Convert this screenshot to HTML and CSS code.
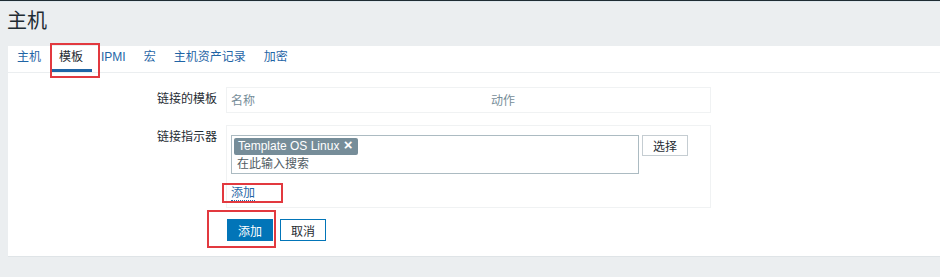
FILE: index.html
```html
<!DOCTYPE html>
<html lang="zh-CN">
<head>
    <meta charset="UTF-8">
    <title>主机</title>
    <link rel="stylesheet" href="styles.css">
</head>
<body>

    <header class="page-header">
        <h1>主机</h1>
    </header>

    <div class="page-body">
        <ul class="tabs">
            <li><a href="#">主机</a></li>
            <li class="active marked"><a href="#">模板</a></li>
            <li><a href="#">IPMI</a></li>
            <li><a href="#">宏</a></li>
            <li><a href="#">主机资产记录</a></li>
            <li><a href="#">加密</a></li>
        </ul>

        <form class="form-grid">
            <label class="form-label">链接的模板</label>
            <div class="form-box linked-box">
                <table class="linked-table">
                    <tr>
                        <th class="col-name">名称</th>
                        <th>动作</th>
                    </tr>
                </table>
            </div>

            <label class="form-label">链接指示器</label>
            <div class="form-box indicator-box">
                <div class="select-row">
                    <div class="multiselect">
                        <span class="tag">Template OS Linux <b class="tag-remove">&times;</b></span>
                        <div class="ms-input">在此输入搜索</div>
                    </div>
                    <button type="button" class="btn-alt">选择</button>
                </div>
                <div class="add-row">
                    <a href="#" class="link-action marked">添加</a>
                </div>
            </div>

            <div></div>
            <div class="form-buttons">
                <span class="marked btn-mark"><button type="button" class="btn-primary">添加</button></span>
                <button type="button" class="btn-cancel">取消</button>
            </div>
        </form>
    </div>

</body>
</html>
```

FILE: styles.css
```css
/* Base */
body {
    margin: 0;
    font-family: "Liberation Sans", "Noto Sans CJK SC", sans-serif;
    font-size: 12px;
    color: #1f2c33;
    background-color: #ebeef0;
    border-top: 1px solid #1f2c33;
}

.page-header {
    height: 44px;
    padding: 0 7px;
    border-top: 1px solid #dfe8ee;
}

.page-header h1 {
    margin: 0;
    padding-top: 6px;
    font-size: 20px;
    font-weight: normal;
    line-height: 26px;
    color: #1f2c33;
}

.page-body {
    margin-left: 8px;
    background-color: #ffffff;
    border-bottom: 1px solid #dfe4e7;
    padding-bottom: 15px;
}

/* Tabs */
.tabs {
    list-style: none;
    margin: 0;
    padding: 0;
    display: flex;
    height: 26px;
    border-bottom: 1px solid #ebeef0;
}

.tabs li {
    position: relative;
}

.tabs a {
    display: block;
    padding: 0 9px;
    line-height: 23px;
    height: 23px;
    border-bottom: 3px solid transparent;
    color: #1f65a6;
    text-decoration: none;
}

.tabs .active a {
    color: #1f2c33;
    border-bottom-color: #1f65a6;
}

/* Red annotation boxes */
.marked {
    position: relative;
}

.marked::after {
    content: "";
    position: absolute;
    border: 2px solid #e2393f;
    pointer-events: none;
}

.tabs .marked::after {
    top: -3px;
    left: 0;
    right: -8px;
    bottom: -6px;
}

/* Form */
.form-grid {
    display: grid;
    grid-template-columns: 209px 485px;
    column-gap: 9px;
    row-gap: 12px;
    padding-top: 14px;
}

.form-label {
    text-align: right;
    padding-top: 2px;
}

.form-box {
    border: 1px solid #f0f2f3;
    box-sizing: border-box;
}

.linked-box {
    height: 26px;
}

.linked-table {
    border-collapse: collapse;
    width: 100%;
}

.linked-table th {
    text-align: left;
    font-weight: normal;
    color: #768d99;
    padding: 3px 4px 0;
}

.linked-table .col-name {
    width: 252px;
}

.indicator-box {
    padding: 9px 4px 7px;
}

.select-row {
    display: flex;
    align-items: flex-start;
    gap: 3px;
}

.multiselect {
    width: 408px;
    height: 39px;
    box-sizing: border-box;
    border: 1px solid #acbbc2;
    padding: 2px 2px 0;
}

.tag {
    display: inline-block;
    background-color: #768d99;
    color: #ffffff;
    line-height: 17px;
    padding: 0 6px 0 4px;
    border-radius: 2px;
}

.tag-remove {
    font-size: 15px;
    line-height: 12px;
    margin-left: 1px;
}

.ms-input {
    padding: 1px 3px;
    line-height: 16px;
    color: #4f5c63;
}

.btn-alt {
    height: 21px;
    width: 46px;
    padding: 0;
    font: inherit;
    color: #1f2c33;
    background-color: #ffffff;
    border: 1px solid #c5cdd2;
}

.add-row {
    padding-top: 12px;
    line-height: 14px;
}

.link-action {
    color: #1f65a6;
    text-decoration: none;
    border-bottom: 1px dotted #1f65a6;
}

.add-row .marked::after {
    top: -3px;
    left: -9px;
    right: -28px;
    bottom: -3px;
}

.form-buttons {
    display: flex;
    gap: 7px;
    margin-top: -1px;
}

.btn-primary,
.btn-cancel {
    display: block;
    height: 22px;
    padding: 0 10px;
    font: inherit;
    border: 1px solid #0275b8;
}

.btn-primary {
    background-color: #0275b8;
    color: #ffffff;
}

.btn-cancel {
    background-color: #ffffff;
    color: #1f2c33;
}

.btn-mark {
    display: block;
    margin-left: 1px;
}

.btn-mark::after {
    top: -9px;
    left: -20px;
    right: -3px;
    bottom: -7px;
}
```
